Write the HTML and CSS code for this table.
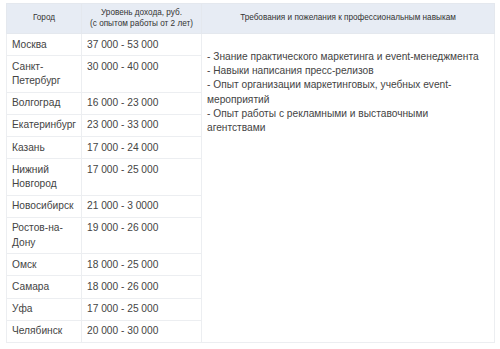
FILE: index.html
```html
<!DOCTYPE html>
<html lang="ru">
<head>
<meta charset="utf-8">
<link rel="stylesheet" href="styles.css">
</head>
<body>
<table class="salary">
  <thead>
    <tr>
      <th class="c-city">Город</th>
      <th class="c-pay">Уровень дохода, руб.<br>(с опытом работы от 2 лет)</th>
      <th class="c-req">Требования и пожелания к профессиональным навыкам</th>
    </tr>
  </thead>
  <tbody>
    <tr>
      <td>Москва</td>
      <td>37 000 - 53 000</td>
      <td class="req" rowspan="12">- Знание практического маркетинга и event-менеджмента<br>- Навыки написания пресс-релизов<br>- Опыт организации маркетинговых, учебных event-мероприятий<br>- Опыт работы с рекламными и выставочными агентствами</td>
    </tr>
    <tr><td>Санкт-Петербург</td><td>30 000 - 40 000</td></tr>
    <tr><td>Волгоград</td><td>16 000 - 23 000</td></tr>
    <tr><td>Екатеринбург</td><td>23 000 - 33 000</td></tr>
    <tr><td>Казань</td><td>17 000 - 24 000</td></tr>
    <tr><td>Нижний Новгород</td><td>17 000 - 25 000</td></tr>
    <tr><td>Новосибирск</td><td>21 000 - 3 0000</td></tr>
    <tr><td>Ростов-на-Дону</td><td>19 000 - 26 000</td></tr>
    <tr><td>Омск</td><td>18 000 - 25 000</td></tr>
    <tr><td>Самара</td><td>18 000 - 26 000</td></tr>
    <tr><td>Уфа</td><td>17 000 - 25 000</td></tr>
    <tr><td>Челябинск</td><td>20 000 - 30 000</td></tr>
  </tbody>
</table>
</body>
</html>
```

FILE: styles.css
```css
html, body {
  margin: 0;
  padding: 0;
  background: #ffffff;
}

body {
  padding: 3px 0 0 6px;
  font-family: "Liberation Sans", Arial, sans-serif;
  color: #444444;
}

.salary {
  border-collapse: collapse;
  table-layout: fixed;
  width: 488px;
  border: 1px solid #e2e5e9;
}

.salary th,
.salary td {
  box-sizing: border-box;
}

.salary th {
  background: #e7ecf4;
  color: #333333;
  font-weight: normal;
  font-size: 8.2px;
  line-height: 10.5px;
  padding: 4px 3px;
  height: 30px;
  text-align: center;
  vertical-align: middle;
  border: 1px solid #e4e8ee;
}

.c-city { width: 75px; }
.c-pay { width: 120px; }
.c-req { width: 293px; }

.salary td {
  font-size: 10.2px;
  line-height: 14.2px;
  padding: 3.5px 5px 3.5px 5px;
  vertical-align: top;
  border: 1px solid #eceef1;
  text-align: left;
}

.salary td.req {
  padding-top: 16px;
  padding-right: 6px;
}
```
